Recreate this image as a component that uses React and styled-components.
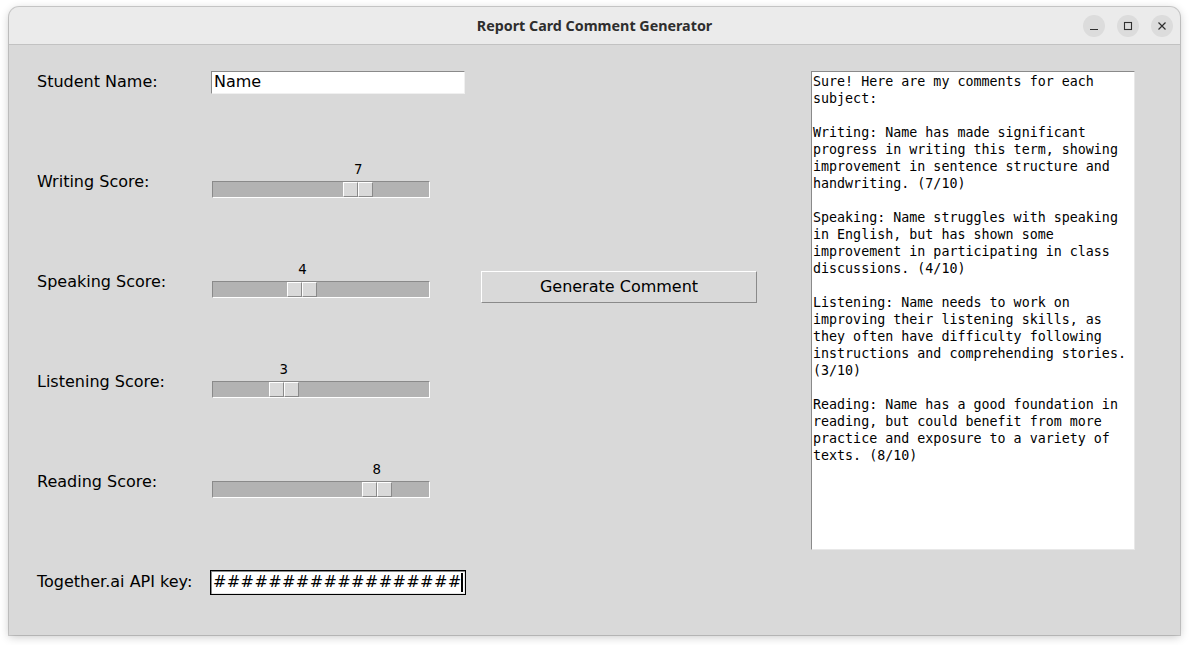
import React from 'react';
import styled, { createGlobalStyle } from 'styled-components';

const GlobalStyle = createGlobalStyle`
  html, body {
    margin: 0;
    padding: 0;
    background: #ffffff;
    width: 1190px;
    height: 645px;
    overflow: hidden;
  }
`;

const ui = {
  body: '#d9d9d9',
  trough: '#b3b3b3',
  dark: '#8a8a8a',
  light: '#ffffff',
  sans: '"DejaVu Sans", "Liberation Sans", sans-serif',
  mono: '"DejaVu Sans Mono", "Liberation Mono", monospace',
};

const Desktop = styled.div`
  padding: 7px 0 0 9px;
`;

const Window = styled.div`
  width: 1171px;
  height: 628px;
  border-radius: 10px 10px 0 0;
  overflow: hidden;
  background: ${ui.body};
  box-shadow: 0 0 0 1px rgba(0, 0, 0, 0.18), 0 2px 10px rgba(0, 0, 0, 0.22);
  display: flex;
  flex-direction: column;
`;

const TitleBar = styled.div`
  height: 37px;
  flex: none;
  background: #ebebeb;
  border-bottom: 1px solid #c2c2c2;
  display: flex;
  align-items: center;
  justify-content: center;
  position: relative;
  font-family: "Noto Sans", "DejaVu Sans", sans-serif;
  font-weight: 700;
  font-size: 14.3px;
  color: #2e2e2e;
`;

const Controls = styled.div`
  position: absolute;
  right: 7px;
  top: 8px;
  display: flex;
  gap: 12px;
`;

const CtrlButton = styled.div`
  width: 22px;
  height: 22px;
  border-radius: 50%;
  background: #dcdcdc;
  display: flex;
  align-items: center;
  justify-content: center;
  color: #2f2f2f;
`;

const Body = styled.div`
  flex: 1;
  padding: 12px 0 0 28px;
  display: grid;
  grid-template-columns: 174px 270px 330px 324px;
  grid-template-rows: repeat(6, 50px);
  row-gap: 50px;
  align-items: center;
  font-family: ${ui.sans};
  font-size: 16px;
  color: #000;
`;

const Label = styled.div`
  grid-column: 1;
  grid-row: ${(p) => p.$row};
  line-height: 20px;
`;

const Entry = styled.div`
  grid-column: 2;
  grid-row: ${(p) => p.$row};
  justify-self: start;
  box-sizing: border-box;
  width: ${(p) => (p.$focus ? '256px' : '254px')};
  height: ${(p) => (p.$focus ? '25px' : '23px')};
  margin-left: ${(p) => (p.$focus ? '-1px' : '0')};
  background: #fff;
  border: 1px solid ${(p) => (p.$focus ? '#000' : 'transparent')};
  box-shadow: ${(p) =>
    p.$focus
      ? `inset 1px 1px 0 ${ui.dark}, inset -1px -1px 0 #e6e6e6`
      : 'none'};
  ${(p) =>
    !p.$focus &&
    `border-color: ${ui.dark} #f0f0f0 #f0f0f0 ${ui.dark};`}
  padding: 0 2px;
  display: flex;
  align-items: center;
  white-space: nowrap;
  overflow: hidden;
  line-height: 20px;
  letter-spacing: ${(p) => (p.$focus ? '0.4px' : 'normal')};
`;

const Cursor = styled.span`
  display: inline-block;
  width: 2px;
  height: 19px;
  background: #000;
  margin-left: -1px;
`;

const ScaleWrap = styled.div`
  grid-column: 2;
  grid-row: ${(p) => p.$row};
  align-self: end;
  margin: 0 0 9px 1px;
  width: 218px;
  position: relative;
`;

const Trough = styled.div`
  box-sizing: border-box;
  height: 17px;
  background: ${ui.trough};
  border: 1px solid;
  border-color: ${ui.dark} ${ui.light} ${ui.light} ${ui.dark};
  position: relative;
`;

const Handle = styled.div`
  position: absolute;
  top: 0;
  width: 30px;
  height: 15px;
  display: flex;
`;

const HandleHalf = styled.span`
  box-sizing: border-box;
  flex: 1;
  background: ${ui.body};
  border: 1px solid;
  border-color: ${ui.light} ${ui.dark} ${ui.dark} ${ui.light};
`;

const ScaleValue = styled.div`
  position: absolute;
  bottom: 20px;
  width: 30px;
  text-align: center;
  font-size: 13.33px;
  line-height: 16px;
`;

const ActionButton = styled.button`
  grid-column: 3;
  grid-row: 3;
  justify-self: start;
  align-self: end;
  margin-bottom: 4px;
  box-sizing: border-box;
  width: 276px;
  height: 32px;
  background: ${ui.body};
  border: 1px solid;
  border-color: ${ui.light} ${ui.dark} ${ui.dark} ${ui.light};
  font-family: ${ui.sans};
  font-size: 16px;
  color: #000;
  padding: 0 0 1px;
`;

const Output = styled.div`
  grid-column: 4;
  grid-row: 1 / span 6;
  align-self: stretch;
  margin: 14px 0 57px;
  box-sizing: border-box;
  background: #fff;
  border: 1px solid;
  border-color: ${ui.dark} #e8e8e8 #e8e8e8 ${ui.dark};
  padding: 1px 1px;
  font-family: ${ui.mono};
  font-size: 13.33px;
  line-height: 17px;
  white-space: pre;
  overflow: hidden;
`;

const comment = `Sure! Here are my comments for each
subject:

Writing: Name has made significant
progress in writing this term, showing
improvement in sentence structure and
handwriting. (7/10)

Speaking: Name struggles with speaking
in English, but has shown some
improvement in participating in class
discussions. (4/10)

Listening: Name needs to work on
improving their listening skills, as
they often have difficulty following
instructions and comprehending stories.
(3/10)

Reading: Name has a good foundation in
reading, but could benefit from more
practice and exposure to a variety of
texts. (8/10)`;

const scores = [
  { label: 'Writing Score:', value: 7 },
  { label: 'Speaking Score:', value: 4 },
  { label: 'Listening Score:', value: 3 },
  { label: 'Reading Score:', value: 8 },
];

const Scale = ({ row, value }) => {
  // tk scale: slider travels over the trough minus its own length
  const left = (value / 10) * 186;
  return (
    <ScaleWrap $row={row}>
      <ScaleValue style={{ left: left + 1 }}>{value}</ScaleValue>
      <Trough>
        <Handle style={{ left }}>
          <HandleHalf />
          <HandleHalf />
        </Handle>
      </Trough>
    </ScaleWrap>
  );
};

const App = () => {
  return (
    <Desktop>
      <GlobalStyle />
      <Window>
        <TitleBar>
          Report Card Comment Generator
          <Controls>
            <CtrlButton>
              <svg width="10" height="10" viewBox="0 0 10 10">
                <path d="M1 8.5h8" stroke="currentColor" strokeWidth="1.2" />
              </svg>
            </CtrlButton>
            <CtrlButton>
              <svg width="10" height="10" viewBox="0 0 10 10">
                <rect x="1.5" y="1.5" width="7" height="7" fill="none" stroke="currentColor" strokeWidth="1.1" />
              </svg>
            </CtrlButton>
            <CtrlButton>
              <svg width="10" height="10" viewBox="0 0 10 10">
                <path d="M1.5 1.5l7 7M8.5 1.5l-7 7" stroke="currentColor" strokeWidth="1.2" />
              </svg>
            </CtrlButton>
          </Controls>
        </TitleBar>
        <Body>
          <Label $row={1}>Student Name:</Label>
          <Entry $row={1}>Name</Entry>

          {scores.map((s, i) => (
            <React.Fragment key={s.label}>
              <Label $row={i + 2}>{s.label}</Label>
              <Scale row={i + 2} value={s.value} />
            </React.Fragment>
          ))}

          <ActionButton>Generate Comment</ActionButton>

          <Label $row={6}>Together.ai API key:</Label>
          <Entry $row={6} $focus>
            ##################
            <Cursor />
          </Entry>

          <Output>{comment}</Output>
        </Body>
      </Window>
    </Desktop>
  );
};

export default App;
